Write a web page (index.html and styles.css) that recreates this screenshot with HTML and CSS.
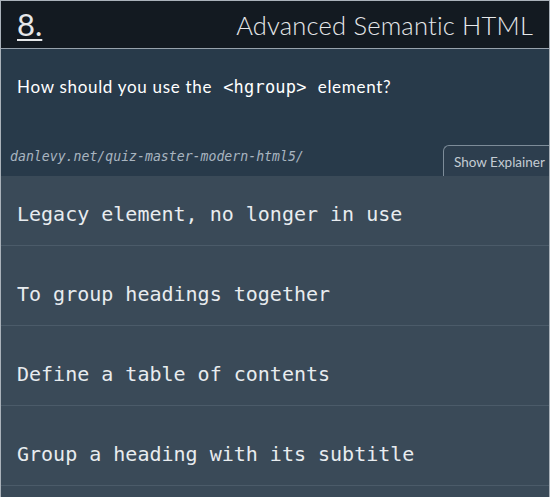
FILE: index.html
```html
<!DOCTYPE html>
<html>
<head>
<meta charset="utf-8">
<link rel="stylesheet" href="styles.css">
</head>
<body>
<div class="quiz">
  <header class="head">
    <a class="num">8.</a>
    <h1 class="title">Advanced Semantic HTML</h1>
  </header>
  <section class="question">
    <p class="q">How should you use the <code>&lt;hgroup&gt;</code> element?</p>
    <div class="meta">
      <span class="url">danlevy.net/quiz-master-modern-html5/</span>
      <button class="explain">Show Explainer</button>
    </div>
  </section>
  <ul class="answers">
    <li class="ans first">Legacy element, no longer in use</li>
    <li class="ans">To group headings together</li>
    <li class="ans">Define a table of contents</li>
    <li class="ans">Group a heading with its subtitle</li>
  </ul>
</div>
</body>
</html>
```

FILE: styles.css
```css
html, body {
  margin: 0;
  padding: 0;
  background: #3a4a58;
}
.quiz {
  width: 550px;
  height: 497px;
  box-sizing: border-box;
  border: 1px solid #aab2ba;
  border-bottom: none;
  overflow: hidden;
  background: #3a4a58;
  font-family: Lato, "Open Sans", sans-serif;
}
.head {
  height: 47px;
  background: #131a21;
  border-bottom: 1px solid #97a2ac;
  display: flex;
  align-items: center;
  justify-content: space-between;
  padding: 0 16px 0 16px;
  color: #e6e8ea;
}
.num {
  font-size: 31px;
  font-weight: 400;
  text-decoration: underline;
  text-decoration-thickness: 2px;
  text-underline-offset: 3px;
  margin-top: -1px;
}
.title {
  margin: 0;
  font-size: 25.5px;
  font-weight: 300;
  letter-spacing: 0.2px;
}
.question {
  background: #283a4a;
  height: 127px;
  display: flex;
  flex-direction: column;
  justify-content: space-between;
}
.q {
  margin: 27px 0 0 16px;
  font-size: 17px;
  letter-spacing: 0.7px;
  color: #ffffff;
}
.q code {
  font-family: "DejaVu Sans Mono", monospace;
  font-size: 17px;
  letter-spacing: 0.2px;
  margin: 0 6px;
}
.meta {
  display: flex;
  justify-content: space-between;
  align-items: flex-end;
}
.url {
  font-family: "DejaVu Sans Mono", monospace;
  font-style: italic;
  font-size: 13.2px;
  color: #a9b5c0;
  margin: 0 0 12px 9px;
}
.explain {
  font-family: Lato, "Open Sans", sans-serif;
  font-size: 13.5px;
  color: #c4ccd3;
  background: #2d3e4e;
  border: 1px solid #7d8c99;
  border-right: none;
  border-bottom: none;
  border-radius: 6px 0 0 0;
  height: 31px;
  width: 106px;
  padding: 2px 0 0 10px;
  text-align: left;
  white-space: nowrap;
}
.answers {
  list-style: none;
  margin: 0;
  padding: 0;
}
.ans {
  font-family: "DejaVu Sans Mono", monospace;
  font-size: 20px;
  line-height: 24px;
  color: #e8ecef;
  padding: 36px 16px 19px 16px;
  border-bottom: 1px solid #4b5b69;
}
.ans.first {
  padding-top: 26px;
}
```
